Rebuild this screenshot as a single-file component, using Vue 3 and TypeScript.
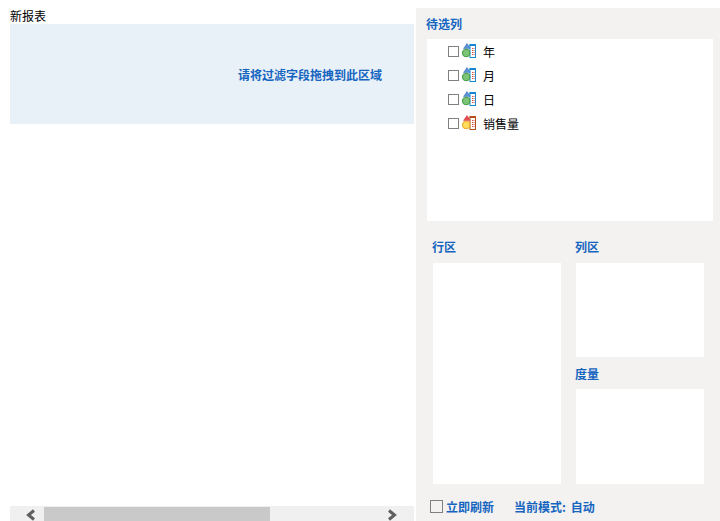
<script setup lang="ts">
interface Field { name: string; kind: 'dim' | 'measure' }
const fields: Field[] = [
  { name: '年', kind: 'dim' },
  { name: '月', kind: 'dim' },
  { name: '日', kind: 'dim' },
  { name: '销售量', kind: 'measure' },
]
const palette = {
  dim: { tri: '#5b8fd6', triEdge: '#3f6fb5', circle: '#7cc576', circleEdge: '#3d9a46', doc: '#1a86d0' },
  measure: { tri: '#e8484f', triEdge: '#d23a40', circle: '#ffdc5c', circleEdge: '#e8a820', doc: '#b5501c' },
}
</script>

<template>
  <div class="page">
    <main class="report">
      <div class="report-title">新报表</div>
      <div class="filter-zone"><span class="label">请将过滤字段拖拽到此区域</span></div>
      <div class="canvas"></div>
      <div class="scrollbar">
        <div class="arrow arrow-left">
          <svg width="12" height="12" viewBox="0 0 12 12"><path d="M9 1.500 3.500 6 9 10.500" fill="none" stroke="#5f5f5f" stroke-width="3" /></svg>
        </div>
        <div class="thumb"></div>
        <div class="track"></div>
        <div class="arrow arrow-right">
          <svg width="12" height="12" viewBox="0 0 12 12"><path d="M3 1.500 8.500 6 3 10.500" fill="none" stroke="#5f5f5f" stroke-width="3" /></svg>
        </div>
      </div>
    </main>

    <aside class="panel">
      <div class="label head">待选列</div>
      <ul class="fields">
        <li v-for="f in fields" :key="f.name" class="field">
          <span class="check field-check"></span>
          <svg class="icon" width="16" height="17" viewBox="0 0 16 17">
            <path d="M1.500 5.500 5 0.500 8.500 5.500Z" :fill="palette[f.kind].tri" :stroke="palette[f.kind].triEdge" stroke-width="0.500" />
            <rect x="8" y="2" width="5.500" height="12.500" fill="#fff" :stroke="palette[f.kind].doc" stroke-width="1" />
            <path d="M7.500 2h6.500" :stroke="palette[f.kind].doc" stroke-width="2" />
            <path d="M10 5.500h3M10 7.500h3M10 9.500h3M10 11.500h3" stroke="#d0504a" stroke-width="1" stroke-dasharray="1 0.500" />
            <circle cx="4.200" cy="10" r="3.800" :fill="palette[f.kind].circle" :stroke="palette[f.kind].circleEdge" stroke-width="1" />
          </svg>
          <span class="field-name">{{ f.name }}</span>
        </li>
      </ul>

      <div class="zones">
        <section class="zone-col">
          <div class="label zone-head">行区</div>
          <div class="box row-box"></div>
        </section>
        <section class="zone-col">
          <div class="label zone-head">列区</div>
          <div class="box col-box"></div>
          <div class="label zone-head measure-head">度量</div>
          <div class="box measure-box"></div>
        </section>
      </div>

      <div class="foot">
        <span class="check foot-check"></span>
        <span class="label">立即刷新</span>
        <span class="label mode">当前模式: 自动</span>
      </div>
    </aside>
  </div>
</template>

<style scoped>
.page {
  display: flex;
  width: 720px;
  height: 521px;
  overflow: hidden;
  background: #fff;
  font-family: "Noto Sans CJK SC", "Liberation Sans", sans-serif;
  font-size: 12px;
  color: #000;
}
.report {
  display: flex;
  flex-direction: column;
  width: 404px;
  margin: 0 2px 0 10px;
  padding-top: 8px;
  box-sizing: border-box;
}
.report-title {
  height: 16px;
  line-height: 16px;
  flex: none;
}
.filter-zone {
  display: flex;
  align-items: center;
  justify-content: flex-end;
  flex: none;
  height: 100px;
  padding: 1px 32px 0 0;
  box-sizing: border-box;
  background: #e8f0f8;
}
.label {
  font-weight: 700;
  color: #1565c0;
  line-height: 16px;
}
.canvas {
  flex: 1;
}
.scrollbar {
  display: flex;
  flex: none;
  height: 15px;
  background: #f0f0f0;
}
.arrow {
  display: flex;
  align-items: center;
  flex: none;
  height: 15px;
}
.arrow-left {
  width: 34px;
  padding-left: 15px;
  box-sizing: border-box;
}
.arrow-right {
  width: 44px;
  padding-left: 16px;
  box-sizing: border-box;
}
.arrow svg {
  margin-top: 2px;
}
.thumb {
  width: 226px;
  margin-top: 1px;
  background: #c9c9c9;
}
.track {
  flex: 1;
}
.panel {
  display: flex;
  flex-direction: column;
  width: 304px;
  margin-top: 8px;
  padding: 8px 7px 0 10px;
  box-sizing: border-box;
  background: #f3f2f1;
}
.head {
  height: 23px;
  flex: none;
}
.fields {
  flex: none;
  height: 182px;
  margin: 0 0 0 1px;
  padding: 1px 0 0 21px;
  box-sizing: border-box;
  list-style: none;
  background: #fff;
}
.field {
  display: flex;
  align-items: center;
  height: 24px;
}
.check {
  display: block;
  flex: none;
  width: 9px;
  height: 9px;
  border: 1px solid #808080;
  background: #fff;
}
.field-check {
  margin-top: -2px;
}
.icon {
  flex: none;
  margin: -2px 0 0 3px;
}
.field-name {
  margin-left: 5px;
  line-height: 24px;
}
.zones {
  display: flex;
  flex: none;
  gap: 15px;
  margin-top: 18px;
  padding-left: 7px;
}
.zone-col {
  display: flex;
  flex-direction: column;
  width: 128px;
}
.zone-head {
  height: 24px;
  margin-left: -1px;
}
.box {
  background: #fff;
}
.row-box {
  height: 221px;
}
.col-box {
  height: 94px;
}
.measure-head {
  height: 16px;
  margin: 9px 0 7px -1px;
}
.measure-box {
  height: 95px;
}
.foot {
  display: flex;
  align-items: center;
  flex: none;
  margin-top: 15px;
  padding-left: 4px;
}
.foot-check {
  width: 11px;
  height: 11px;
  margin: -2px 3px 0 0;
  background: transparent;
}
.mode {
  margin-left: 20px;
  word-spacing: 2px;
}
</style>

<style>
html, body { margin: 0; padding: 0; background: #fff; }
</style>
